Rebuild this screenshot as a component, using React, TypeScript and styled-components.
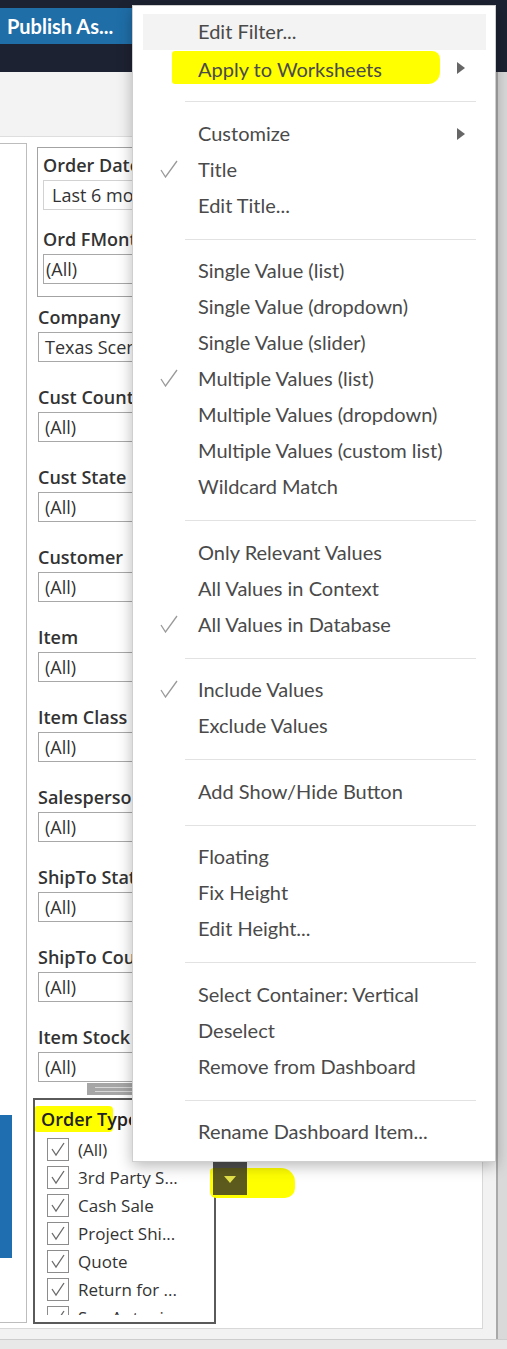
import React from "react";
import styled, { createGlobalStyle } from "styled-components";

const Global = createGlobalStyle`
  html, body { margin: 0; padding: 0; background: #f2f2f2; }
  * { box-sizing: border-box; }
`;

const Page = styled.div`
  position: relative;
  width: 507px;
  height: 1349px;
  overflow: hidden;
  background: #f2f2f2;
  font-family: "Open Sans", "Noto Sans", sans-serif;
`;

const TopBar = styled.div`
  height: 72px;
  background: #1d2232;
  padding-top: 8px;
`;

const PublishButton = styled.div`
  width: 300px;
  height: 36px;
  background: #1f6ea8;
  color: #fff;
  font-family: Lato, "Open Sans", sans-serif;
  font-weight: 700;
  font-size: 20px;
  line-height: 36px;
  padding-left: 7px;
  white-space: nowrap;
`;

const Main = styled.div`
  display: flex;
  height: 1267px;
`;

const Column = styled.div`
  width: 496px;
  display: flex;
  flex-direction: column;
`;

const Toolbar = styled.div`
  height: 65px;
  background: #f3f3f3;
  border-bottom: 1px solid #dedede;
`;

const CanvasRow = styled.div`
  display: flex;
`;

const Canvas = styled.div`
  width: 483px;
  height: 1192px;
  background: #fff;
  border-right: 1px solid #d8d8d8;
  border-bottom: 1px solid #d8d8d8;
  display: flex;
  align-items: flex-start;
`;

const Scrollbar = styled.div`
  width: 11px;
  background: #d9d9d9;
  border-left: 2px solid #a9a9a9;
`;

const Footer = styled.div`
  height: 10px;
  background: #e8e8e8;
  border-top: 1px solid #cdcdcd;
`;

const LeftBox = styled.div`
  width: 27px;
  height: 1180px;
  margin-top: 6px;
  border: 1px solid #bdbdbd;
  border-left: none;
  display: flex;
  flex-direction: column;
`;

const BlueBar = styled.div`
  width: 12px;
  height: 143px;
  margin-top: 971px;
  background: #1f6fb0;
`;

const FilterColumn = styled.div`
  margin-left: 6px;
  padding-top: 10px;
  width: 300px;
  display: flex;
  flex-direction: column;
`;

const GroupBox = styled.div`
  margin-left: 4px;
  width: 104px;
  height: 150px;
  border: 1px solid #a3a3a3;
  border-right: none;
  padding: 2px 0 0 5px;
  overflow: hidden;
`;

const Filter = styled.div<{ $first?: boolean }>`
  margin-left: 5px;
  width: 100px;
  overflow: hidden;
  margin-top: ${(p) => (p.$first ? 5 : 20)}px;
`;

const Label = styled.div<{ $gap?: number }>`
  height: 30px;
  line-height: 30px;
  margin-top: ${(p) => p.$gap ?? 0}px;
  font-size: 18px;
  font-weight: 600;
  color: #333;
  white-space: nowrap;
`;

const Select = styled.div<{ $pad?: number; $light?: boolean }>`
  width: 250px;
  height: 30px;
  border: 1px solid ${(p) => (p.$light ? "#d2d2d2" : "#a8a8a8")};
  padding-left: ${(p) => p.$pad ?? 6}px;
  line-height: 28px;
  font-size: 18px;
  color: #333;
  white-space: nowrap;
  background: #fff;
`;

const Handle = styled.div`
  margin-left: 54px;
  width: 110px;
  height: 12px;
  margin-top: 1px;
  background: #a6a6a6;
  display: flex;
  flex-direction: column;
  justify-content: center;
  gap: 3px;
  padding: 0 8px;
`;

const HandleLine = styled.div`
  height: 1px;
  background: #d8d8d8;
`;

const ListBox = styled.div`
  margin-top: 3px;
  width: 183px;
  height: 226px;
  border: 2px solid #5a5a5a;
  position: relative;
`;

const ListTitle = styled.div`
  position: relative;
  height: 34px;
  padding: 6px 0 0 6px;
  font-size: 18px;
  font-weight: 600;
  color: #222;
  line-height: 26px;
  white-space: nowrap;
  width: 96px;
  overflow: hidden;
`;

const Marker = styled.span`
  position: absolute;
  left: 0;
  top: 6px;
  width: 78px;
  height: 26px;
  background: #ffff00;
  border-radius: 2px 4px 4px 2px;
`;

const TitleText = styled.span`
  position: relative;
`;

const List = styled.div`
  height: 181px;
  overflow: hidden;
  padding-top: 1px;
`;

const Row = styled.div`
  height: 28px;
  display: flex;
  align-items: center;
  padding-left: 12px;
  gap: 9px;
  font-size: 17px;
  color: #333;
  white-space: nowrap;
`;

const Box = styled.div`
  width: 22px;
  height: 23px;
  border: 1px solid #8c8c8c;
  background: #fff;
  display: flex;
  align-items: center;
  justify-content: center;
`;

const Menu = styled.div`
  position: absolute;
  left: 132px;
  top: 5px;
  width: 364px;
  background: #fff;
  border: 1px solid #cfcfcf;
  box-shadow: 0 4px 14px rgba(0, 0, 0, 0.28);
  padding: 8px 0 11px;
  font-family: Lato, "Open Sans", sans-serif;
  font-size: 20px;
  color: #4a4a4a;
`;

const Item = styled.div<{ $hover?: boolean }>`
  position: relative;
  height: 36px;
  margin: 0 9px 0 10px;
  padding-left: 55px;
  padding-bottom: 2px;
  display: flex;
  align-items: center;
  white-space: nowrap;
  background: ${(p) => (p.$hover ? "#f3f3f3" : "transparent")};
`;

const Check = styled.svg`
  position: absolute;
  left: 17px;
  top: 8px;
`;

const Arrow = styled.div`
  position: absolute;
  right: 21px;
  top: 12px;
  width: 0;
  height: 0;
  border-left: 8px solid #666;
  border-top: 6px solid transparent;
  border-bottom: 6px solid transparent;
`;

const Highlight = styled.span`
  margin-left: -26px;
  padding: 6px 58px 3px 26px;
  background: #ffff00;
  border-radius: 3px 8px 12px 3px;
`;

const Sep = styled.div`
  height: 1px;
  margin: 15px 19px 13.5px 52px;
  background: #e2e2e2;
`;

const Smear = styled.div`
  position: absolute;
  left: 210px;
  top: 1168px;
  width: 85px;
  height: 30px;
  background: #ffff00;
  border-radius: 4px 14px 10px 6px;
`;

const DropButton = styled.div`
  position: absolute;
  left: 213px;
  top: 1162px;
  width: 34px;
  height: 33px;
  background: linear-gradient(#4f4f4f 0, #4f4f4f 6px, #5c5a1c 6px);
  display: flex;
  align-items: center;
  justify-content: center;
`;

const DropTri = styled.div`
  width: 0;
  height: 0;
  border-top: 7px solid #e3e24a;
  border-left: 6px solid transparent;
  border-right: 6px solid transparent;
  margin-top: 2px;
`;

const filters = [
  "Company",
  "Cust Country",
  "Cust State",
  "Customer",
  "Item",
  "Item Class",
  "Salesperson",
  "ShipTo State",
  "ShipTo Country",
  "Item Stock Status",
];

const values: Record<string, string> = { Company: "Texas Scenic Company" };

const listItems = [
  "(All)",
  "3rd Party S...",
  "Cash Sale",
  "Project Shi...",
  "Quote",
  "Return for ...",
  "San Antoni...",
];

type MenuEntry =
  | { sep: true }
  | { label: string; check?: boolean; arrow?: boolean; hover?: boolean; mark?: boolean };

const menu: MenuEntry[] = [
  { label: "Edit Filter...", hover: true },
  { label: "Apply to Worksheets", arrow: true, mark: true },
  { sep: true },
  { label: "Customize", arrow: true },
  { label: "Title", check: true },
  { label: "Edit Title..." },
  { sep: true },
  { label: "Single Value (list)" },
  { label: "Single Value (dropdown)" },
  { label: "Single Value (slider)" },
  { label: "Multiple Values (list)", check: true },
  { label: "Multiple Values (dropdown)" },
  { label: "Multiple Values (custom list)" },
  { label: "Wildcard Match" },
  { sep: true },
  { label: "Only Relevant Values" },
  { label: "All Values in Context" },
  { label: "All Values in Database", check: true },
  { sep: true },
  { label: "Include Values", check: true },
  { label: "Exclude Values" },
  { sep: true },
  { label: "Add Show/Hide Button" },
  { sep: true },
  { label: "Floating" },
  { label: "Fix Height" },
  { label: "Edit Height..." },
  { sep: true },
  { label: "Select Container: Vertical" },
  { label: "Deselect" },
  { label: "Remove from Dashboard" },
  { sep: true },
  { label: "Rename Dashboard Item..." },
];

const MenuCheck = () => (
  <Check width="18" height="18" viewBox="0 0 18 18">
    <polyline points="1,10 5.5,17 17,1" fill="none" stroke="#9a9a9a" strokeWidth="1.3" />
  </Check>
);

const BoxCheck = () => (
  <svg width="16" height="16" viewBox="0 0 16 16">
    <polyline points="2,8 6,14 14,2" fill="none" stroke="#6a6a6a" strokeWidth="1.3" />
  </svg>
);

export default function App() {
  return (
    <Page>
      <Global />
      <TopBar>
        <PublishButton>Publish As...</PublishButton>
      </TopBar>
      <Main>
        <Column>
          <Toolbar />
          <CanvasRow>
            <Canvas>
              <LeftBox>
                <BlueBar />
              </LeftBox>
              <FilterColumn>
                <GroupBox>
                  <Label>Order Date</Label>
                  <Select $light $pad={8}>Last 6 months</Select>
                  <Label $gap={14}>Ord FMonth</Label>
                  <Select $pad={2}>(All)</Select>
                </GroupBox>
                {filters.map((f, i) => (
                  <Filter key={f} $first={i === 0}>
                    <Label>{f}</Label>
                    <Select>{values[f] ?? "(All)"}</Select>
                  </Filter>
                ))}
                <Handle>
                  <HandleLine />
                  <HandleLine />
                </Handle>
                <ListBox>
                  <ListTitle>
                    <Marker />
                    <TitleText>Order Type</TitleText>
                  </ListTitle>
                  <List>
                    {listItems.map((t) => (
                      <Row key={t}>
                        <Box>
                          <BoxCheck />
                        </Box>
                        {t}
                      </Row>
                    ))}
                  </List>
                </ListBox>
              </FilterColumn>
            </Canvas>
          </CanvasRow>
        </Column>
        <Scrollbar />
      </Main>
      <Footer />
      <Smear />
      <DropButton>
        <DropTri />
      </DropButton>
      <Menu>
        {menu.map((m, i) =>
          "sep" in m ? (
            <Sep key={i} />
          ) : (
            <Item key={i} $hover={m.hover}>
              {m.check && <MenuCheck />}
              {m.mark ? <Highlight>{m.label}</Highlight> : m.label}
              {m.arrow && <Arrow />}
            </Item>
          )
        )}
      </Menu>
    </Page>
  );
}
